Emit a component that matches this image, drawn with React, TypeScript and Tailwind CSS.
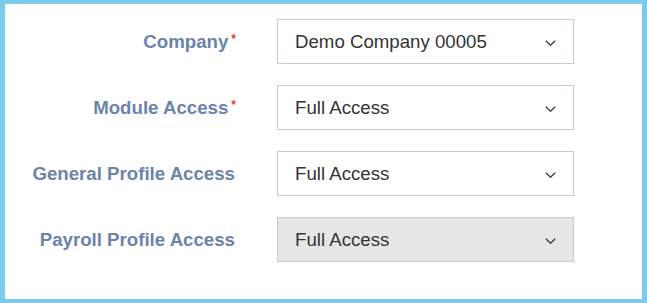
const rows = [
  { label: 'Company', value: 'Demo Company 00005', required: true, disabled: false },
  { label: 'Module Access', value: 'Full Access', required: true, disabled: false },
  { label: 'General Profile Access', value: 'Full Access', required: false, disabled: false },
  { label: 'Payroll Profile Access', value: 'Full Access', required: false, disabled: true },
]

const Chevron = () => (
  <svg width="11" height="6" viewBox="0 0 11 6" fill="none" className="text-[#3a3f4a] mt-[2px]">
    <path d="M0.8 0.8l4.7 4.4 4.7-4.4" stroke="currentColor" strokeWidth="1.4" />
  </svg>
)

export default function App() {
  return (
    <div className="w-[647px] h-[303px] bg-white border-[#7dcbeb] border-x-[5px] border-y-4 font-['Liberation_Sans',Arial,sans-serif]">
      <div className="flex flex-col gap-[21px] pt-[15px]">
        {rows.map((row) => (
          <div key={row.label} className="flex items-center h-[45px]">
            <div className="w-[231px] flex justify-end items-start text-[18.67px] font-bold text-[#6b84aa] pt-[1px]">
              <span>{row.label}</span>
              {row.required ? (
                <span className="text-[12px] text-[#e8412c] ml-[3px] mt-[5px] leading-none">*</span>
              ) : (
                <span className="w-[1px]" />
              )}
            </div>
            <div
              className={`ml-[41px] w-[297px] h-[45px] flex items-center justify-between pl-[17px] pr-[17px] border border-[#c4cad7] text-[18.67px] text-[#333] ${
                row.disabled ? 'bg-[#e6e6e6]' : 'bg-white'
              }`}
            >
              <span className="pt-[1px]">{row.value}</span>
              <Chevron />
            </div>
          </div>
        ))}
      </div>
    </div>
  )
}
